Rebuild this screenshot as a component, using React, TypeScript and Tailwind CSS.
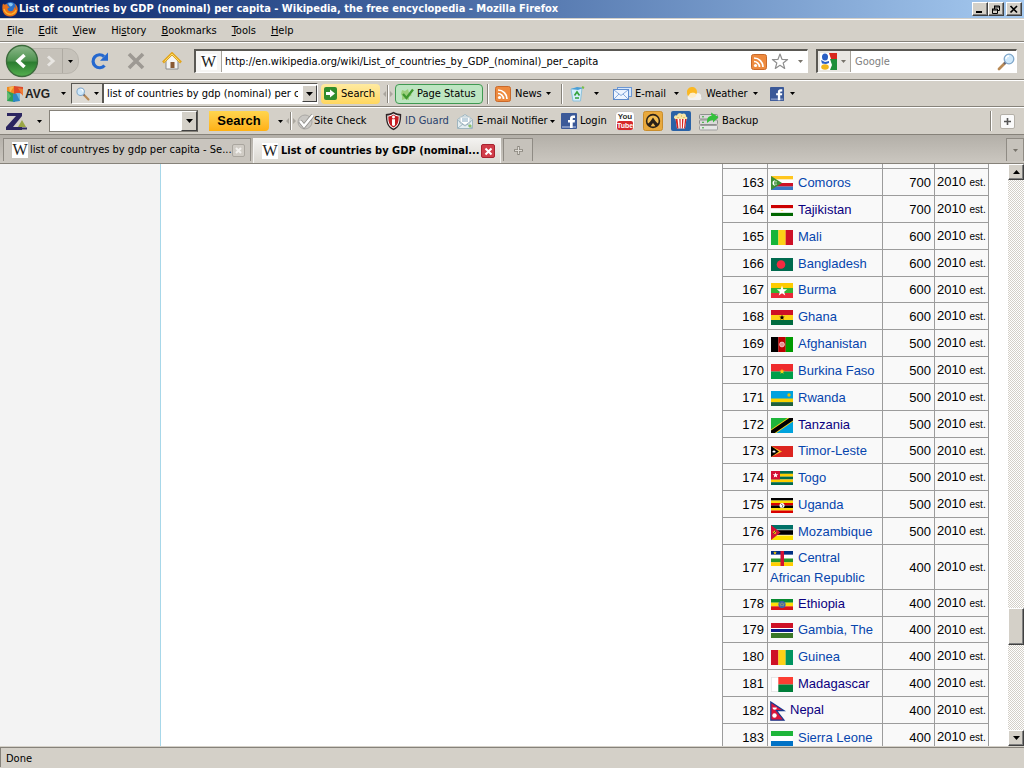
import React from 'react';
import { clsx } from 'clsx';

type Country = {
  rank: number;
  name: string;
  gdp: number;
  flag: React.ReactNode;
  visited?: boolean;
  height?: string;
};

const menus = ['File', 'Edit', 'View', 'History', 'Bookmarks', 'Tools', 'Help'];
const accessKeyIndex: Record<string, number> = { History: 2 };

const star = (cx: number, cy: number, r: number) =>
  Array.from({ length: 10 }, (_, i) => {
    const a = (Math.PI / 5) * i - Math.PI / 2;
    const d = i % 2 ? r * 0.42 : r;
    return `${(cx + Math.cos(a) * d).toFixed(2)},${(cy + Math.sin(a) * d).toFixed(2)}`;
  }).join(' ');

const HBars = ({ colors }: { colors: string[] }) => (
  <>
    {colors.map((c, i) => (
      <rect key={i} x="0" y={(15 / colors.length) * i} width="22" height={15 / colors.length + 0.1} fill={c} />
    ))}
  </>
);

const VBars = ({ colors }: { colors: string[] }) => (
  <>
    {colors.map((c, i) => (
      <rect key={i} x={(22 / colors.length) * i} y="0" width={22 / colors.length + 0.1} height="15" fill={c} />
    ))}
  </>
);

const countries: Country[] = [
  {
    rank: 163, name: 'Comoros', gdp: 700, height: 'h-[14px]',
    flag: <><HBars colors={['#ffc61e', '#ffffff', '#ce1126', '#3a75c4']} /><path d="M0 0l11 7.500L0 15z" fill="#3d8e33" /><path d="M4.500 4.500a3 3 0 100 6 4 4 0 010-6z" fill="#fff" /><path d="M5 5.500v4" stroke="#fff" strokeDasharray="1 .5" /></>,
  },
  {
    rank: 164, name: 'Tajikistan', gdp: 700, visited: true, height: 'h-[11px]',
    flag: <><rect width="22" height="15" fill="#fff" /><rect width="22" height="4.300" fill="#cc0000" /><rect y="10.700" width="22" height="4.300" fill="#006600" /><path d="M10 8h2l.5-1-1 .5-.5-1-.5 1-1-.5z" fill="#f8c300" /></>,
  },
  { rank: 165, name: 'Mali', gdp: 600, flag: <VBars colors={['#14b53a', '#fcd116', '#ce1126']} /> },
  {
    rank: 166, name: 'Bangladesh', gdp: 600, height: 'h-[13px]',
    flag: <><rect width="22" height="15" fill="#006a4e" /><ellipse cx="10" cy="7.500" rx="4.300" ry="5" fill="#f42a41" /></>,
  },
  { rank: 167, name: 'Burma', gdp: 600, flag: <><HBars colors={['#fecb00', '#34b233', '#ea2839']} /><polygon points={star(11, 8, 5.5)} fill="#fff" /></> },
  { rank: 168, name: 'Ghana', gdp: 600, flag: <><HBars colors={['#ce1126', '#fcd116', '#006b3f']} /><polygon points={star(11, 7.5, 2.8)} fill="#000" /></> },
  {
    rank: 169, name: 'Afghanistan', gdp: 500,
    flag: <><VBars colors={['#000000', '#be0000', '#009900']} /><circle cx="11" cy="7.500" r="2.400" fill="#e88f8f" stroke="#f6d4d4" strokeWidth=".8" /></>,
  },
  { rank: 170, name: 'Burkina Faso', gdp: 500, flag: <><HBars colors={['#ef2b2d', '#009e49']} /><polygon points={star(11, 7.5, 2.8)} fill="#fcd116" /></> },
  {
    rank: 171, name: 'Rwanda', gdp: 500,
    flag: <><rect width="22" height="15" fill="#00a1de" /><rect y="7.500" width="22" height="4" fill="#fad201" /><rect y="11.300" width="22" height="3.700" fill="#20603d" /><circle cx="18" cy="4" r="1.700" fill="#e5be01" /></>,
  },
  {
    rank: 172, name: 'Tanzania', gdp: 500, visited: true,
    flag: <><rect width="22" height="15" fill="#1eb53a" /><path d="M22 0v15H0z" fill="#00a3dd" /><path d="M-1 15.700L23-.7" stroke="#fcd116" strokeWidth="6" /><path d="M-1 15.700L23-.7" stroke="#000" strokeWidth="4.200" /></>,
  },
  {
    rank: 173, name: 'Timor-Leste', gdp: 500, height: 'h-[11px]',
    flag: <><rect width="22" height="15" fill="#dc241f" /><path d="M0 0l11 7.500L0 15z" fill="#ffc726" /><path d="M0 0l8 7.500L0 15z" fill="#000" /><polygon points={star(3, 7.5, 2.4)} fill="#fff" /></>,
  },
  {
    rank: 174, name: 'Togo', gdp: 500, height: 'h-[14px]',
    flag: <><HBars colors={['#006a4e', '#ffce00', '#006a4e', '#ffce00', '#006a4e']} /><rect width="9" height="9" fill="#d21034" /><polygon points={star(4.5, 4.5, 3)} fill="#fff" /></>,
  },
  {
    rank: 175, name: 'Uganda', gdp: 500,
    flag: <><HBars colors={['#000000', '#fcdc04', '#d90000', '#000000', '#fcdc04', '#d90000']} /><circle cx="11" cy="7.500" r="2.500" fill="#fff" /><path d="M10 6l2 1.500-1 2" stroke="#555" strokeWidth=".8" fill="none" /></>,
  },
  {
    rank: 176, name: 'Mozambique', gdp: 500,
    flag: <><rect width="22" height="15" fill="#fff" /><rect width="22" height="4.500" fill="#007168" /><rect y="5.200" width="22" height="4.600" fill="#000" /><rect y="10.500" width="22" height="4.500" fill="#fce100" /><path d="M0 0l9.500 7.500L0 15z" fill="#d21034" /><polygon points={star(3.5, 7.5, 2.4)} fill="#fce100" /><path d="M2 9l3-3" stroke="#333" strokeWidth=".8" /></>,
  },
  {
    rank: 177, name: 'Central African Republic', gdp: 400,
    flag: <><HBars colors={['#003082', '#ffffff', '#289728', '#ffce00']} /><rect x="9.500" width="3.500" height="15" fill="#d21034" /><polygon points={star(4, 2, 1.9)} fill="#ffce00" /></>,
  },
  {
    rank: 178, name: 'Ethiopia', gdp: 400, visited: true, height: 'h-[11px]',
    flag: <><HBars colors={['#078930', '#fcdd09', '#da121a']} /><ellipse cx="11" cy="7.500" rx="3.600" ry="4.800" fill="#3a63ae" /><polygon points={star(11, 7.5, 2.6)} fill="none" stroke="#b7b45a" strokeWidth=".6" /></>,
  },
  {
    rank: 179, name: 'Gambia, The', gdp: 400,
    flag: <><rect width="22" height="15" fill="#fff" /><rect width="22" height="5" fill="#ce1126" /><rect y="6" width="22" height="3" fill="#0c1c8c" /><rect y="10" width="22" height="5" fill="#3a7728" /></>,
  },
  { rank: 180, name: 'Guinea', gdp: 400, flag: <VBars colors={['#ce1126', '#fcd116', '#009460']} /> },
  {
    rank: 181, name: 'Madagascar', gdp: 400, visited: true,
    flag: <><rect width="22" height="15" fill="#fff" /><path d="M8 .3H.3v14.400H8" fill="none" stroke="#d0d0d0" strokeWidth=".6" /><rect x="7.300" width="14.700" height="7.500" fill="#fc3d32" /><rect x="7.300" y="7.500" width="14.700" height="7.500" fill="#007e3a" /></>,
  },
  { rank: 182, name: 'Nepal', gdp: 400, visited: true, flag: null },
  { rank: 183, name: 'Sierra Leone', gdp: 400, flag: <HBars colors={['#1eb53a', '#ffffff', '#0072c6']} /> },
];

const Flag = ({ country }: { country: Country }) => {
  if (country.name === 'Nepal') {
    return (
      <svg viewBox="0 0 16 20" className="mr-1 inline h-5 w-4 align-middle" aria-hidden="true">
        <path d="M.8.9L14 9.700H6.500L14 19.200H.8z" fill="#dc143c" stroke="#1a3a8f" strokeWidth="1.200" />
        <path d="M2.500 6.500a2.200 2.200 0 004.400 0z" fill="#fff" />
        <circle cx="4.500" cy="14.500" r="2.200" fill="#fff" />
      </svg>
    );
  }
  return (
    <svg
      viewBox="0 0 22 15"
      preserveAspectRatio="none"
      className={clsx('mr-[5px] ml-px inline w-[22px] overflow-hidden align-middle', country.height ?? 'h-[15px]')}
      aria-hidden="true"
    >
      {country.flag}
    </svg>
  );
};

const Caret = ({ className }: { className?: string }) => (
  <svg viewBox="0 0 5 3" className={clsx('h-[3px] w-[5px] shrink-0', className)} fill="currentColor" aria-hidden="true">
    <path d="M0 0h5L2.500 3z" />
  </svg>
);

const Grip = () => (
  <svg viewBox="0 0 10 20" className="h-5 w-[10px] shrink-0" aria-hidden="true">
    <path d="M4.500 1v18" stroke="#8a867e" />
    <path d="M5.500 1v18" stroke="#fff" />
    <path d="M3 7v6L0 10zM7 7v6l3-3z" fill="#aaa69e" />
  </svg>
);

const Separator = () => <div className="h-5 w-[2px] shrink-0 border-r border-l border-r-white border-l-[#86827a]" />;

const FirefoxIcon = () => (
  <svg viewBox="0 0 16 16" className="h-4 w-4 shrink-0" aria-hidden="true">
    <circle cx="8.500" cy="7.500" r="6.500" fill="#2a6fc9" />
    <path d="M6 2.500c2-1 4-.5 5 .5l-1 2-2 .5z" fill="#8cc8f0" />
    <path d="M1 2.500c.5 1 1.500 1 2.500 1C5 3 6 4 5.500 5l2 1.200-2 1.300c0 2 1.500 3 3.500 2.800 2-.3 3.300-2 3-4.300 1 .5 1.200 1.500 1.200 2.200C14 6 13.500 4 12.500 2.500 15.500 4.500 16.500 8 15 11.500 13 15.500 8 16.500 4 14.500.5 12.500-.5 7 1 2.500z" fill="#e8701a" />
    <path d="M2 8c1 4 4.500 6 8 5 2-.5 3.500-2 4.200-4" fill="none" stroke="#fcb52c" strokeWidth="1.300" />
  </svg>
);

const WikiIcon = () => (
  <span className="flex h-4 w-4 shrink-0 items-center justify-center bg-white font-['Liberation_Serif',serif] text-base leading-none text-[#222]">W</span>
);

const RssIcon = () => (
  <svg viewBox="0 0 16 16" className="h-4 w-4 shrink-0" aria-hidden="true">
    <rect x=".5" y=".5" width="15" height="15" rx="2" fill="#ee8a3e" stroke="#c9692a" />
    <circle cx="4.500" cy="11.500" r="1.600" fill="#fff" />
    <path d="M3 7.500a5.500 5.500 0 015.500 5.500M3 4a9 9 0 019 9" fill="none" stroke="#fff" strokeWidth="1.700" />
  </svg>
);

const FacebookIcon = ({ className }: { className: string }) => (
  <svg viewBox="0 0 16 16" className={clsx('shrink-0', className)} aria-hidden="true">
    <rect width="16" height="16" rx="1" fill="#3b5998" />
    <rect x="1" y="13" width="14" height="2" fill="#7d92c1" />
    <path d="M9 15V9.500H7V7h2V5.500C9 3.500 10.200 2.500 12 2.500h2V5h-1.300c-.8 0-1 .4-1 1v1H14l-.3 2.500h-2V15z" fill="#fff" />
  </svg>
);

const Magnifier = ({ className }: { className: string }) => (
  <svg viewBox="0 0 18 18" className={clsx('shrink-0', className)} aria-hidden="true">
    <path d="M2 16l6-6" stroke="#b98a55" strokeWidth="2.800" strokeLinecap="round" />
    <path d="M7 11l2-2" stroke="#667" strokeWidth="2" />
    <circle cx="12" cy="6" r="4.800" fill="#cfe8fa" stroke="#7fa6c9" strokeWidth="1.300" />
    <path d="M9 6a3 3 0 013-3" stroke="#fff" strokeWidth="1.300" fill="none" />
  </svg>
);

const AvgLogo = () => (
  <svg viewBox="0 0 18 18" className="h-[18px] w-[18px] shrink-0" aria-hidden="true">
    <path d="M1 2l8-1v8l-8 2z" fill="#ef8b22" />
    <path d="M3 2.500l5-1-4 6z" fill="#f7b955" />
    <path d="M8 1l9 1v8l-3-2-6 1z" fill="#dc4a2b" />
    <path d="M12 3l5 1v7z" fill="#ee7d35" />
    <path d="M1 6l8 3v8l-8-1z" fill="#2f9e56" />
    <path d="M1 6l4 5-4 5z" fill="#62bb70" />
    <path d="M7 9l7-1v8l-7 1z" fill="#2f86c4" />
    <path d="M10 8l4 0v8z" fill="#6fb5df" />
  </svg>
);

const SmallMail = () => (
  <svg viewBox="0 0 19 14" className="h-[14px] w-[19px] shrink-0" aria-hidden="true">
    <rect x="4.500" y=".5" width="14" height="9" fill="#d6e6fb" stroke="#6c97d3" />
    <rect x=".5" y="2.500" width="15" height="10" fill="#eef5ff" stroke="#5f8ccc" />
    <path d="M1 3l7 5.500L15 3M1 12l5-5M15 12l-5-5" fill="none" stroke="#87aadd" />
  </svg>
);

const OpenMail = () => (
  <svg viewBox="0 0 16 15" className="h-[15px] w-4 shrink-0" aria-hidden="true">
    <path d="M.5 5.500L8 .5l7.500 5v9H.5z" fill="#e4eef2" stroke="#9fb6c0" />
    <path d="M3 3h10v6l-5 3-5-3z" fill="#fff" stroke="#b8c8ce" />
    <path d="M5 5h6M5 7h6" stroke="#84a8be" />
    <path d="M.5 6L8 11.500 15.500 6M1 14l5-4M15 14l-5-4" fill="none" stroke="#9fb6c0" />
    <path d="M11 12l2-2 2 2-2 2z" fill="#8bbf6a" />
  </svg>
);

const TitleBar = () => (
  <div className="flex h-[18px] shrink-0 items-center bg-linear-to-r from-[#0a246a] to-[#a6caf0] px-[2px]">
    <FirefoxIcon />
    <h1 className="ml-px grow truncate font-bold text-white">
      List of countries by GDP (nominal) per capita - Wikipedia, the free encyclopedia - Mozilla Firefox
    </h1>
    <div className="flex">
      {['Minimize', 'Restore', 'Close'].map((label) => (
        <button
          key={label}
          aria-label={label}
          className="flex h-[14px] w-4 items-center justify-center border border-t-white border-r-[#404040] border-b-[#404040] border-l-white bg-[#d4d0c8] shadow-[inset_-1px_-1px_0_#808080] last:ml-[2px]"
        >
          <svg viewBox="0 0 10 9" className="h-[9px] w-[10px]" fill="none" stroke="#000">
            {label === 'Minimize' && <path d="M1 7h6" strokeWidth="2" />}
            {label === 'Restore' && <path d="M3 1h5.500M3 2h5.500M3.500 1v3M8.500 1v4.500H6M1 4h5.500M1 5h5.500M1.500 4v4.500h5V4" />}
            {label === 'Close' && <path d="M1.500 1l6.500 6.500M8 1L1.500 7.500" strokeWidth="1.700" />}
          </svg>
        </button>
      ))}
    </div>
  </div>
);

const MenuBar = () => (
  <nav className="mt-px flex h-[23px] shrink-0 items-center gap-[15px] border-t border-b border-t-white border-b-[#86827a] pt-px pl-[7px]">
    {menus.map((menu) => {
      const i = accessKeyIndex[menu] ?? 0;
      return (
        <button key={menu}>
          {menu.slice(0, i)}
          <span className="underline">{menu[i]}</span>
          {menu.slice(i + 1)}
        </button>
      );
    })}
  </nav>
);

const NavigationBar = () => (
  <div className="flex h-[38px] shrink-0 items-center border-t border-b border-t-white border-b-[#86827a] pr-[7px] pl-[5px]">
    <button aria-label="Back" className="z-10 shrink-0">
      <svg viewBox="0 0 34 34" className="h-[34px] w-[34px]">
        <defs>
          <linearGradient id="back" x1="0" y1="0" x2="0" y2="1">
            <stop offset="0" stopColor="#8db88b" />
            <stop offset=".48" stopColor="#4f9450" />
            <stop offset=".55" stopColor="#2b7d30" />
            <stop offset="1" stopColor="#54b04f" />
          </linearGradient>
        </defs>
        <circle cx="17" cy="17" r="15.500" fill="url(#back)" stroke="#3c6b3c" strokeWidth="1.400" />
        <path d="M19.500 11L13 17l6.500 6" fill="none" stroke="#fff" strokeWidth="3.600" />
      </svg>
    </button>
    <div className="-ml-2 flex h-[26px] w-12 shrink-0 items-center rounded-r-xl border border-[#b9b5ad] bg-[#c6c2ba]">
      <button aria-label="Forward" className="flex h-6 w-8 items-center justify-center border-r border-[#aeaaa2] pl-2">
        <svg viewBox="0 0 10 12" className="h-3 w-[10px]" fill="none" stroke="#e8e6e2" strokeWidth="3">
          <path d="M2 1.500L7 6l-5 4.500" />
        </svg>
      </button>
      <button aria-label="Recent pages" className="flex h-6 w-4 items-center justify-center">
        <Caret />
      </button>
    </div>
    <button aria-label="Reload" className="ml-3 shrink-0">
      <svg viewBox="0 0 18 18" className="h-[18px] w-[18px]">
        <path d="M13.500 13.500A6.500 6.500 0 1113 4.500" fill="none" stroke="#2568cf" strokeWidth="3.200" />
        <path d="M17 .5v8.200H9z" fill="#2568cf" />
      </svg>
    </button>
    <button aria-label="Stop" className="ml-[18px] shrink-0">
      <svg viewBox="0 0 18 18" className="h-[18px] w-[18px]">
        <path d="M2 2l14 14M16 2L2 16" stroke="#9d9993" strokeWidth="3.600" />
      </svg>
    </button>
    <button aria-label="Home" className="ml-[17px] shrink-0">
      <svg viewBox="0 0 20 18" className="h-[18px] w-5">
        <path d="M4 9l6-6 6 6v8H4z" fill="#f4f4f4" stroke="#8c8c8c" />
        <path d="M1 10.500L10 1.500l9 9" fill="none" stroke="#e3a51d" strokeWidth="2.600" />
        <path d="M2.500 9.500L10 2l7.500 7.500" fill="none" stroke="#fbdc66" />
        <rect x="8.500" y="10" width="4" height="6" fill="#8a5a34" />
      </svg>
    </button>
    <div className="ml-3 flex h-6 min-w-0 grow items-center border-t-2 border-r border-b border-l-2 border-t-[#5a5853] border-r-white border-b-white border-l-[#5a5853] bg-white">
      <div className="flex h-full w-[26px] shrink-0 items-center justify-center border-r border-[#a8a49c] bg-[#f6f5f3]">
        <WikiIcon />
      </div>
      <input
        aria-label="Address"
        defaultValue="http://en.wikipedia.org/wiki/List_of_countries_by_GDP_(nominal)_per_capita"
        className="min-w-0 grow pl-[3px] outline-none"
      />
      <RssIcon />
      <button aria-label="Bookmark this page" className="ml-1">
        <svg viewBox="0 0 18 18" className="h-[18px] w-[18px]">
          <polygon points={star(9, 9, 8)} fill="#fff" stroke="#8e8e8e" strokeWidth="1.200" strokeLinejoin="round" />
        </svg>
      </button>
      <Caret className="mr-1 ml-[9px] text-[#77736b]" />
    </div>
    <div className="ml-2 flex h-6 w-[201px] shrink-0 items-center border-t-2 border-r border-b border-l-2 border-t-[#5a5853] border-r-white border-b-white border-l-[#5a5853] bg-white">
      <button aria-label="Search engine" className="flex h-full w-[33px] items-center border-r border-[#a8a49c] bg-[#e9e7e3] pl-[2px]">
        <svg viewBox="0 0 17 17" className="h-[17px] w-[17px]">
          <rect width="17" height="17" fill="#fff" />
          <path d="M9 0h8v6h-6z" fill="#d8271c" />
          <path d="M10 6h7v11h-7l2-5z" fill="#1e8f3a" />
          <ellipse cx="5" cy="4" rx="3" ry="3.500" fill="#2a5fc4" />
          <path d="M1 7l4 2 4-1v2l-3 1-4-.5z" fill="#2a5fc4" />
          <ellipse cx="5" cy="14" rx="3.800" ry="2.700" fill="#f2b71d" />
        </svg>
        <Caret className="ml-1 text-[#77736b]" />
      </button>
      <input aria-label="Search the web" placeholder="Google" className="min-w-0 grow pl-1 outline-none placeholder:text-[#808080]" />
      <Magnifier className="mr-px h-[18px] w-[18px]" />
    </div>
  </div>
);

const AvgBar = () => (
  <div className="flex h-[27px] shrink-0 items-center border-t border-b border-t-white border-b-[#86827a] pl-[6px]">
    <button className="flex w-[65px] shrink-0 items-center">
      <AvgLogo />
      <span className="ml-px font-['Liberation_Sans',sans-serif] text-xs font-bold text-[#222]">AVG</span>
      <Caret className="ml-[11px]" />
    </button>
    <div className="flex h-[21px] w-[247px] shrink-0 items-center border border-t-[#5a5853] border-r-white border-b-white border-l-[#5a5853] bg-white">
      <button aria-label="Search provider" className="flex h-full w-8 items-center gap-1 border-r-2 border-[#5a5853] bg-[#dedbd5] pl-1">
        <Magnifier className="h-[14px] w-[14px] -scale-x-100" />
        <Caret />
      </button>
      <input aria-label="AVG search" defaultValue="list of countries by gdp (nominal) per capita" className="min-w-0 grow pl-[3px] outline-none" />
      <button aria-label="Search history" className="ml-1 flex h-[17px] w-[15px] shrink-0 items-center justify-center border border-t-white border-r-[#404040] border-b-[#404040] border-l-white bg-[#d4d0c8]">
        <svg viewBox="0 0 7 4" className="h-1 w-[7px] shrink-0"><path d="M0 0h7L3.500 4z" /></svg>
      </button>
    </div>
    <button className="ml-[3px] flex h-5 w-[59px] shrink-0 items-center rounded-sm bg-linear-to-b from-[#ffeaa0] to-[#ffd75e] pl-[3px]">
      <svg viewBox="0 0 13 13" className="mr-1 h-[13px] w-[13px]" aria-hidden="true">
        <rect width="13" height="13" rx="2" fill="#2f8c2c" />
        <path d="M2 5h4V2.500l5 4-5 4V8H2z" fill="#fff" />
      </svg>
      Search
    </button>
    <div className="ml-[3px]">
      <Grip />
    </div>
    <button className="ml-[2px] flex h-5 w-[88px] shrink-0 items-center rounded-sm border border-[#3f9a52] bg-[#bde5c1] pl-1">
      <svg viewBox="0 0 15 14" className="mr-[2px] h-[14px] w-[15px]" aria-hidden="true">
        <path d="M2 3l3 1 3-2 1 4 3 2-3 2v3l-4-1-3 1V9L1 7z" fill="#9bcf7d" />
        <path d="M3 7l3.500 4L13 2.500" fill="none" stroke="#3f9930" strokeWidth="2.300" />
      </svg>
      Page Status
    </button>
    <div className="ml-1 flex w-[74px] shrink-0 items-center">
      <Separator />
      <span className="ml-[6px]"><RssIcon /></span>
      <button className="ml-1 flex grow items-center justify-between pr-[10px]">News <Caret /></button>
    </div>
    <Separator />
    <button aria-label="Recycle bin" className="ml-[6px] flex w-[44px] shrink-0 items-center">
      <svg viewBox="0 0 16 16" className="h-4 w-4">
        <path d="M2 3l11-1-1.500 13H4z" fill="#d5eefb" stroke="#8cc1dc" />
        <path d="M2 3l6-2 6 1-5 2z" fill="#4a9fd6" />
        <path d="M5.500 9.500L8 6l2.500 3.500M10 12H6" fill="none" stroke="#35a33a" strokeWidth="1.700" />
        <path d="M13 1l2 1" stroke="#7bbf45" strokeWidth="2" />
      </svg>
      <Caret className="ml-[9px]" />
    </button>
    <button className="flex w-[66px] shrink-0 items-center justify-between">
      <SmallMail />
      <span className="grow pl-[3px] text-left">E-mail</span>
      <Caret />
    </button>
    <button className="ml-[6px] flex w-[73px] shrink-0 items-center">
      <svg viewBox="0 0 18 14" className="h-[14px] w-[18px]" aria-hidden="true">
        <circle cx="7" cy="6" r="5" fill="#fbb823" />
        <path d="M4 13a3 3 0 010-5 4 4 0 017-1 3 3 0 015 3 2 2 0 01-1 3z" fill="#fff" opacity=".75" />
        <path d="M2 5.500a5 5 0 0110-1l-2 1z" fill="#fbb823" />
      </svg>
      <span className="grow pl-[3px] text-left">Weather</span>
      <Caret />
    </button>
    <button aria-label="Facebook" className="ml-3 flex shrink-0 items-center gap-[6px]">
      <FacebookIcon className="h-[14px] w-[14px]" />
      <Caret />
    </button>
  </div>
);

const ZoneAlarmBar = () => (
  <div className="flex h-[28px] shrink-0 items-center border-t border-b border-t-white border-b-[#86827a] pl-[6px]">
    <button aria-label="ZoneAlarm" className="flex w-[43px] shrink-0 items-center">
      <svg viewBox="0 0 22 19" className="h-[19px] w-[22px]">
        <path d="M1 1h15v3L7 15h9v3H0v-3L10 4H1z" fill="#2b2560" />
        <path d="M12 15l4-7 4 7z" fill="#9aa644" />
        <path d="M7 16.500h14" stroke="#2b2560" strokeWidth="2" />
      </svg>
      <Caret className="ml-[9px]" />
    </button>
    <div className="flex h-[22px] w-[149px] shrink-0 border border-t-[#86827a] border-r-[#5a5853] border-b-[#86827a] border-l-[#86827a] bg-white">
      <input aria-label="ZoneAlarm search" className="min-w-0 grow px-1 outline-none" />
      <button aria-label="Show suggestions" className="flex w-4 shrink-0 items-center justify-center border border-t-white border-r-[#404040] border-b-[#404040] border-l-white bg-[#d4d0c8]">
        <svg viewBox="0 0 7 4" className="h-1 w-[7px] shrink-0"><path d="M0 0h7L3.500 4z" /></svg>
      </button>
    </div>
    <button className="ml-[11px] h-5 w-[60px] shrink-0 rounded-r-sm bg-linear-to-b from-[#ffd54d] to-[#ffb00f] font-['Liberation_Sans',sans-serif] text-[13px] leading-5 font-bold">
      Search
    </button>
    <Caret className="mr-[3px] ml-[9px]" />
    <Grip />
    <button className="ml-px flex w-[88px] shrink-0 items-center">
      <svg viewBox="0 0 17 17" className="h-[17px] w-[17px]" aria-hidden="true">
        <circle cx="8" cy="9" r="7" fill="#c9c7c3" stroke="#aaa8a4" />
        <path d="M3 8l4 5 9-11" fill="none" stroke="#8f8d89" strokeWidth="4" />
        <path d="M3 8l4 5 9-11" fill="none" stroke="#fff" strokeWidth="2.500" />
      </svg>
      Site Check
    </button>
    <button className="flex w-[72px] shrink-0 items-center text-[#28406c]">
      <svg viewBox="0 0 17 20" className="mr-[3px] h-5 w-[17px]" aria-hidden="true">
        <path d="M8.500.8C6 2.500 3 3 .8 3c0 8 1 13 7.700 16.200C15.200 16 16.200 11 16.200 3 14 3 11 2.500 8.500.8z" fill="#2f2426" />
        <path d="M8.500 2.500C6.500 4 4 4.500 2.300 4.500c0 7 1 10.500 6.200 13 5.200-2.500 6.200-6 6.200-13-1.700 0-4.200-.5-6.200-2z" fill="#fff" />
        <path d="M8.500 3.500C7 4.800 5 5.300 3.300 5.400c0 6 1 9 5.200 11 4.200-2 5.200-5 5.200-11C12 5.300 10 4.800 8.500 3.500z" fill="#c51c22" />
        <circle cx="8.500" cy="6" r="1.500" fill="#fff" />
        <path d="M7 8.200h3v6L8.500 15 7 14.200z" fill="#fff" />
      </svg>
      ID Guard
    </button>
    <button className="flex w-[104px] shrink-0 items-center">
      <OpenMail />
      <span className="ml-1">E-mail Notifier</span>
      <Caret className="ml-[2px]" />
    </button>
    <button className="flex w-[54px] shrink-0 items-center gap-[3px]">
      <FacebookIcon className="h-4 w-4" />
      Login
    </button>
    <button aria-label="YouTube" className="shrink-0">
      <span className="flex h-5 w-5 flex-col items-center rounded-sm border border-[#ccc8c4] bg-white font-['Liberation_Sans',sans-serif] text-[8px] leading-[9px] font-bold">
        <span className="text-[#333]">You</span>
        <span className="w-4 rounded-xs bg-[#d6282a] text-[7px] leading-[9px] text-white">Tube</span>
      </span>
    </button>
    <button aria-label="Grooveshark" className="ml-2 shrink-0">
      <svg viewBox="0 0 20 20" className="h-5 w-5">
        <rect x=".5" y=".5" width="19" height="19" rx="2" fill="#e9a93c" stroke="#c98d2c" />
        <circle cx="10" cy="10" r="7.200" fill="#2a2118" />
        <circle cx="10" cy="10" r="5.600" fill="#f3bd52" />
        <path d="M4 13c2-.5 4-3.500 6-6.500 2 3 4 6 6 6.500a7 7 0 01-3 3L10 12l-3 4a7 7 0 01-3-3z" fill="#2a2118" />
      </svg>
    </button>
    <button aria-label="Popcorn" className="ml-2 shrink-0">
      <svg viewBox="0 0 20 20" className="h-5 w-5">
        <rect width="20" height="20" rx="2" fill="#2a62a6" />
        <path d="M4.500 8h11l-1.500 9.500H6z" fill="#fff" />
        <path d="M4.500 8h2l1 9.500H6zM8.300 8h1.300v9.500H8.800zM11 8h1.500l-.7 9.500h-.9zM14 8h1.500L14 17.500h-1z" fill="#d6241f" />
        <path d="M4 8a2 2 0 012-3.500 3 3 0 015-1.500 2.500 2.500 0 014 2.500A1.700 1.700 0 0116 8z" fill="#f6e6a8" />
        <path d="M6.500 6.500h1M10 5h1M12.500 6.500h1" stroke="#d6a63b" />
      </svg>
    </button>
    <button className="ml-2 flex shrink-0 items-center gap-[3px]">
      <svg viewBox="0 0 20 19" className="h-[19px] w-5" aria-hidden="true">
        <rect x=".5" y="2.500" width="18" height="4.500" rx="1" fill="#dadada" stroke="#8f8f8f" />
        <rect x=".5" y="8" width="18" height="4.500" rx="1" fill="#dadada" stroke="#8f8f8f" />
        <rect x=".5" y="13.500" width="18" height="4.500" rx="1" fill="#e6e6e6" stroke="#9f9f9f" />
        <path d="M3 4.800h2M3 10.300h2M3 15.800h2" stroke="#3aa53a" />
        <path d="M8 11c0-5 1-7 4.500-7L12 .5 19.500 5 14 10.500V8c-2.500 0-3.500 1-6 3z" fill="#35c13b" />
      </svg>
      Backup
    </button>
    <div className="ml-auto">
      <Separator />
    </div>
    <button aria-label="Add toolbar item" className="mr-[9px] ml-2 flex h-[15px] w-[15px] shrink-0 items-center justify-center rounded-xs border border-[#b4b0a8] bg-[#fafafa]">
      <svg viewBox="0 0 9 9" className="h-[9px] w-[9px]"><path d="M4.500 1v7M1 4.500h7" stroke="#555" strokeWidth="1.600" /></svg>
    </button>
  </div>
);

const TabStrip = () => (
  <div className="flex h-[29px] shrink-0 items-start border-b border-[#86827a] bg-linear-to-b from-[#b3afa8] to-[#cbc7c0] pt-[3px] pl-[3px]">
    <div className="flex h-[23px] w-[248px] shrink-0 items-center border border-b-0 border-[#8f8b84] bg-[#c9c5be] pr-[5px] pl-2">
      <WikiIcon />
      <button className="ml-[2px] min-w-0 grow text-left whitespace-nowrap">list of countryes by gdp per capita - Se...</button>
      <button aria-label="Close tab" className="flex h-[13px] w-[13px] shrink-0 items-center justify-center rounded-xs border border-[#aaa69f] bg-[#d0ccc5]">
        <svg viewBox="0 0 9 9" className="h-[9px] w-[9px]"><path d="M2 2l5 5M7 2L2 7" stroke="#f2f0ed" strokeWidth="2" /></svg>
      </button>
    </div>
    <div className="ml-[2px] flex h-[25px] w-[248px] shrink-0 items-center border border-b-0 border-[#f4f3f1] bg-linear-to-b from-[#f3f2f0] to-[#dad7d0] pr-[5px] pl-2">
      <WikiIcon />
      <button className="ml-[3px] min-w-0 grow text-left font-bold whitespace-nowrap">List of countries by GDP (nominal...</button>
      <button aria-label="Close tab" className="flex h-[14px] w-[14px] shrink-0 items-center justify-center rounded-xs border border-[#a82330] bg-[#d13d49]">
        <svg viewBox="0 0 9 9" className="h-[9px] w-[9px]"><path d="M1.500 1.500l6 6M7.500 1.500l-6 6" stroke="#fff" strokeWidth="2" /></svg>
      </button>
    </div>
    <button aria-label="New tab" className="ml-[2px] flex h-[23px] w-[30px] shrink-0 items-center justify-center border border-b-0 border-[#8f8b84] bg-[#c6c2bb]">
      <svg viewBox="0 0 9 9" className="h-[9px] w-[9px]"><path d="M4.500 0v9M0 4.500h9" stroke="#8b877f" strokeWidth="2.400" /><path d="M4.500 1v7M1 4.500h7" stroke="#dedbd5" /></svg>
    </button>
    <button aria-label="List all tabs" className="ml-auto flex h-[23px] w-[18px] shrink-0 items-center justify-center border border-b-0 border-[#8f8b84] bg-[#c6c2bb] text-[#77736b]">
      <Caret />
    </button>
  </div>
);

const CountryTable = () => (
  <table className="w-[267px] table-fixed border-collapse bg-[#f9f9f9] font-['Liberation_Sans',sans-serif] text-[13px] leading-5 text-black">
    <colgroup>
      <col className="w-[45px]" />
      <col className="w-[115px]" />
      <col className="w-[52px]" />
      <col className="w-[54px]" />
    </colgroup>
    <tbody>
      <tr className="h-1">
        {[0, 1, 2, 3].map((i) => (
          <td key={i} className="border border-t-0 border-[#9c9c9c] p-0" />
        ))}
      </tr>
      {countries.map((country) => (
        <tr key={country.rank} className="h-[27px] [&:nth-child(6n)]:h-[26px]">
          <td className="border border-[#9c9c9c] px-[3px] pt-[3px] pb-px text-right">{country.rank}</td>
          <td className="border border-[#9c9c9c] px-[2px] pt-[3px] pb-px">
            <Flag country={country} />
            <a href="#" className={country.visited ? 'text-[#0b0080]' : 'text-[#0645ad]'}>{country.name}</a>
          </td>
          <td className="border border-[#9c9c9c] px-[3px] pt-[3px] pb-px text-right">{country.gdp}</td>
          <td className="border border-[#9c9c9c] px-[2px] pt-[3px] pb-px whitespace-nowrap">
            2010 <small className="text-[10px]">est.</small>
          </td>
        </tr>
      ))}
    </tbody>
  </table>
);

const scrollButton =
  'flex h-4 w-4 shrink-0 items-center justify-center border border-t-white border-r-[#404040] border-b-[#404040] border-l-white bg-[#d4d0c8] shadow-[inset_-1px_-1px_0_#808080]';

const ScrollBar = () => (
  <div className="flex w-4 shrink-0 flex-col bg-[repeating-conic-gradient(#ffffff_0_25%,#d4d0c8_0_50%)] bg-[length:2px_2px]">
    <button aria-label="Scroll up" className={scrollButton}>
      <svg viewBox="0 0 7 4" className="h-1 w-[7px]"><path d="M0 4h7L3.500 0z" /></svg>
    </button>
    <div className="grow-5" />
    <div className="h-[37px] border border-t-white border-r-[#404040] border-b-[#404040] border-l-white bg-[#d4d0c8] shadow-[inset_-1px_-1px_0_#808080]" />
    <div className="grow" />
    <button aria-label="Scroll down" className={scrollButton}>
      <svg viewBox="0 0 7 4" className="h-1 w-[7px]"><path d="M0 0h7L3.500 4z" /></svg>
    </button>
  </div>
);

const App: React.FC = () => {
  return (
    <div className="flex h-screen flex-col overflow-hidden bg-[#d4d0c8] font-['DejaVu_Sans_Condensed','DejaVu_Sans',sans-serif] text-[11px] leading-4 text-black">
      <TitleBar />
      <MenuBar />
      <NavigationBar />
      <AvgBar />
      <ZoneAlarmBar />
      <TabStrip />

      <div className="flex min-h-0 grow">
        <aside className="w-[161px] shrink-0 border-r border-[#a7d7e9] bg-[#f3f3f3]" />
        <main className="flex min-w-0 grow items-start justify-end overflow-hidden bg-white pr-[19px]">
          <CountryTable />
        </main>
        <ScrollBar />
      </div>

      <footer className="mt-px mb-px flex h-5 shrink-0 items-center border-t border-l border-[#86827a] pt-[2px] pl-[5px]">Done</footer>
    </div>
  );
};

export default App;
